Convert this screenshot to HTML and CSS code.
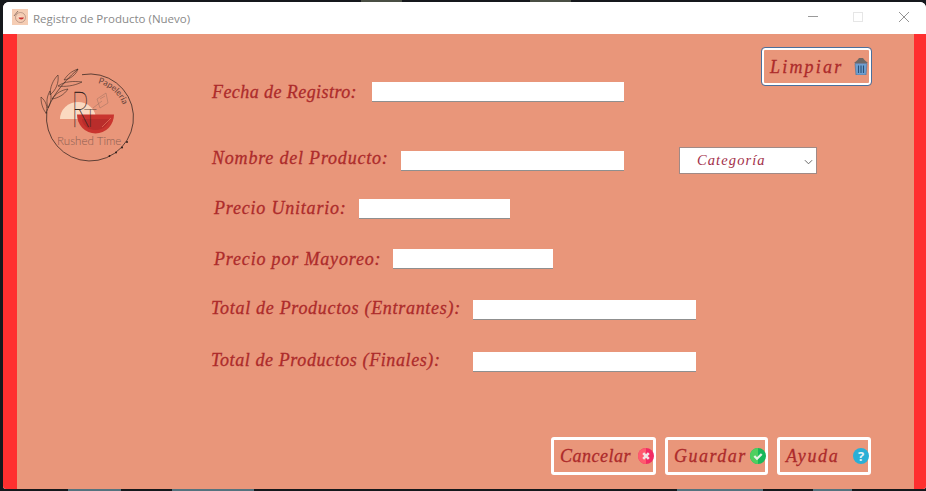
FILE: index.html
```html
<!DOCTYPE html>
<html lang="es">
<head>
<meta charset="utf-8">
<title>Registro de Producto (Nuevo)</title>
<link rel="stylesheet" href="styles.css">
</head>
<body>
<div class="window">
  <header class="titlebar">
    <svg class="app-icon" viewBox="0 0 16 16" aria-hidden="true">
      <rect width="16" height="16" fill="#f5cdb4"/>
      <circle cx="8.500" cy="8.500" r="5" fill="none" stroke="#8a6a5e" stroke-width=".5"/>
      <path d="M5 8.500a3 3 0 0 1 5 0z" fill="#fbe3d2"/>
      <path d="M6.500 8.500h5.500a2.900 2.900 0 0 1-5.500 0z" fill="#c8302e"/>
      <path d="M2 7 6 2" stroke="#6a5048" stroke-width=".7"/>
    </svg>
    <span class="title">Registro de Producto (Nuevo)</span>
    <div class="controls">
      <svg class="ctl" viewBox="0 0 10 10"><path d="M0 4.500h10" stroke="#9a9a9a" fill="none"/></svg>
      <svg class="ctl" viewBox="0 0 10 10"><rect x=".5" y=".5" width="9" height="9" fill="none" stroke="#e6e6e6"/></svg>
      <svg class="ctl ctl-close" viewBox="0 0 10 10"><path d="M0 0 10 10M10 0 0 10" stroke="#888" fill="none" stroke-width=".9"/></svg>
    </div>
  </header>
  <div class="frame">
    <main class="content">
      <aside class="logo-col">
        <svg class="logo" viewBox="40 66 98 98" role="img">
          <path d="M82 74.700A43.500 43.500 0 1 1 46.800 112" fill="none" stroke="#3b2a24" stroke-width=".8"/>
          <path d="M60 119A18 17 0 0 1 96 119Z" fill="#fbd9c0"/>
          <path d="M77 114.500H114A18.500 19 0 0 1 77 114.500Z" fill="#c9352f"/>
          <path d="M82 119H109A13.500 11 0 0 1 82 119Z" fill="#b92d2b"/>
          <path d="M102 127 111 118" stroke="#e0705a" stroke-width=".8"/>
          <path d="M46 114C50 100 60 85 78 69" fill="none" stroke="#3b2a24" stroke-width=".7"/>
          <path d="M64 80C68 74 72 71 78 69 76 75 70 79 64 80ZM58 86C65 81 74 81 82 82 74 86 65 87 58 86ZM50 95C50 87 53 80 58 75 59 83 56 90 50 95ZM52 99C56 93 62 90 68 89 64 95 58 98 52 99ZM46 113C42 108 41 102 41 97 46 101 48 107 46 113ZM48 108C46 102 47 96 50 91 52 97 51 103 48 108Z" fill="none" stroke="#3b2a24" stroke-width=".6"/>
          <path d="M97 99 106 93 108 103 100 108ZM93 108 102 101M100 99 105 96" fill="none" stroke="#9c7060" stroke-width=".5"/>
          <text class="logo-r" transform="translate(71 127) scale(.62 1)">R</text>
          <text class="logo-t" transform="translate(84 127) scale(.85 1)">T</text>
          <text class="logo-name" x="57" y="145">Rushed Time</text>
          <defs><path id="arc" d="M98 83A35 35 0 0 1 125 118"/></defs>
          <text class="logo-pap"><textPath href="#arc">Papelería</textPath></text>
          <circle cx="127" cy="142" r="1" fill="#2c1c18"/><circle cx="122" cy="147.500" r="1" fill="#2c1c18"/><circle cx="116" cy="152.500" r="1" fill="#2c1c18"/><circle cx="109.500" cy="156" r=".9" fill="#2c1c18"/>
        </svg>
      </aside>
      <div class="form">
        <div class="row row-first">
          <label class="lbl lbl-fecha">Fecha de Registro:</label>
          <input class="field w-252" type="text">
          <button class="btn btn-limpiar" type="button"><span>Limpiar</span>
            <svg class="ico" viewBox="0 0 14 17" aria-hidden="true">
              <path d="M0 5 3.500 2 5 0h4l1.500 2L14 5z" fill="#6e6866"/>
              <path d="M1 5.500h12l-1 11.500H2z" fill="#6f9fcf" stroke="#466c95" stroke-width=".6"/>
              <path d="M4.500 7.500v7.500M7 7.500v7.500M9.500 7.500v7.500" stroke="#2a5078" stroke-width="1.100"/>
            </svg>
          </button>
        </div>
        <div class="row row-name">
          <label class="lbl lbl-nombre">Nombre del Producto:</label>
          <input class="field w-223" type="text">
          <div class="select"><span>Categoría</span>
            <svg class="chev" viewBox="0 0 10 6"><path d="M1 1 5 5 9 1" fill="none" stroke="#666" stroke-width="1.100"/></svg>
          </div>
        </div>
        <div class="row row-unit">
          <label class="lbl lbl-precio">Precio Unitario:</label>
          <input class="field w-151" type="text">
        </div>
        <div class="row row-mayor">
          <label class="lbl lbl-mayor">Precio por Mayoreo:</label>
          <input class="field w-160" type="text">
        </div>
        <div class="row row-ent">
          <label class="lbl lbl-total lbl-ent">Total de Productos (Entrantes):</label>
          <input class="field w-223" type="text">
        </div>
        <div class="row row-fin">
          <label class="lbl lbl-total lbl-fin">Total de Productos (Finales):</label>
          <input class="field w-223" type="text">
        </div>
        <footer class="actions">
          <button class="btn btn-cancel" type="button"><span>Cancelar</span>
            <svg class="ico-round" viewBox="0 0 16 16" aria-hidden="true"><circle cx="8" cy="8" r="8" fill="#f22a63"/><path d="M8 0a8 8 0 0 0 0 16z" fill="#ff5a6e"/><path d="M5.200 5.200l5.600 5.600M10.800 5.200l-5.600 5.600" stroke="#f3e3e3" stroke-width="2.600"/></svg>
          </button>
          <button class="btn btn-save" type="button"><span>Guardar</span>
            <svg class="ico-round" viewBox="0 0 16 16" aria-hidden="true"><circle cx="8" cy="8" r="8" fill="#17b85a"/><path d="M8 0a8 8 0 0 0 0 16z" fill="#4fcf5f"/><path d="M4.300 8l2.700 2.700 4.700-4.700" fill="none" stroke="#e8f3e8" stroke-width="2.300"/></svg>
          </button>
          <button class="btn btn-help" type="button"><span>Ayuda</span>
            <svg class="ico-round" viewBox="0 0 16 16" aria-hidden="true"><circle cx="8" cy="8" r="8" fill="#2aafd6"/><text class="q" x="8" y="12.500" text-anchor="middle">?</text></svg>
          </button>
        </footer>
      </div>
    </main>
  </div>
</div>
</body>
</html>
```

FILE: styles.css
```css
* { box-sizing: border-box; }
html, body { margin: 0; height: 100%; }
body {
  overflow: hidden;
  background-color: #15181c;
  background-image:
    linear-gradient(to right, transparent 68px, #55737f 68px, #55737f 121px, transparent 121px, transparent 172px, #55737f 172px, #55737f 254px, transparent 254px, transparent 677px, #55737f 677px, #55737f 763px, transparent 763px, transparent 813px, #55737f 813px, #55737f 852px, transparent 852px),
    linear-gradient(to right, transparent 361px, #4a4f44 361px, #4a4f44 402px, transparent 402px, transparent 530px, #4a4f44 530px, #4a4f44 571px, transparent 571px);
  background-repeat: no-repeat;
  background-size: 100% 2px, 100% 2px;
  background-position: 0 100%, 0 0;
}
.window {
  width: 923px; height: 487px; margin: 2px 0 0 3px;
  display: flex; flex-direction: column;
  border-radius: 6px 6px 3px 3px; overflow: hidden; background: #fff;
}
.titlebar {
  flex: 0 0 32px; display: flex; align-items: center;
  padding: 0 0 2px 9px; background: #fff;
}
.app-icon { width: 16px; height: 16px; }
.title {
  margin: 2px 0 0 5px; font: 11.5px "Open Sans", sans-serif; color: #8a8a8a;
}
.controls { margin-left: auto; display: flex; gap: 35px; padding-right: 17px; }
.ctl { width: 10px; height: 10px; display: block; }
.ctl-close { margin-left: 1px; }
.frame {
  flex: 1; background: #ff2f2f; padding: 0 12px 0 14px; min-height: 0;
}
.content {
  height: 100%; background: #e9967a; display: flex;
  padding: 13px 42px 14px 0;
}
.logo-col { flex: 0 0 195px; padding: 19px 0 0 23px; }
.logo { width: 98px; height: 98px; display: block; }
.logo-r { font: 100 50px Lato, sans-serif; fill: #33231e; stroke: #33231e; stroke-width: .3px; }
.logo-t { font: 100 26px Lato, sans-serif; fill: #33231e; stroke: #33231e; stroke-width: .2px; }
.logo-name { font: 300 11.600px Lato, sans-serif; fill: #8a5d50; }
.logo-pap { font: 8.500px Lato, sans-serif; fill: #5f4038; }
.form { flex: 1; display: flex; flex-direction: column; min-width: 0; }
.row { display: flex; align-items: center; }
.row-first { height: 55px; align-items: flex-end; }
.row-name { margin-top: 45px; height: 27px; }
.row-unit { margin-top: 25px; height: 20px; }
.row-mayor { margin-top: 30px; height: 20px; }
.row-ent { margin-top: 31px; height: 20px; }
.row-fin { margin-top: 32px; height: 20px; }
.lbl, .btn span {
  font-family: "Liberation Serif", serif; font-style: italic; font-weight: 400;
  font-size: 18px; line-height: 20px;
  color: #ad2b2b; white-space: nowrap; -webkit-text-stroke: .3px #ad2b2b;
}
.lbl { flex: none; }
.lbl-fecha { width: 160px; letter-spacing: .43px; }
.lbl-nombre { width: 189px; letter-spacing: .8px; margin-bottom: 5px; }
.lbl-precio { width: 145px; margin-left: 2px; letter-spacing: .8px; margin-bottom: 3px; }
.lbl-mayor { width: 179px; margin-left: 2px; letter-spacing: .83px; }
.lbl-total { margin-left: -1px; width: 262px; margin-bottom: 4px; }
.lbl-ent { letter-spacing: .7px; }
.lbl-fin { letter-spacing: .6px; }
.field {
  height: 20px; border: 0; border-bottom: 1px solid #8f8f8f; background: #fff; padding: 0; flex: none;
  border-radius: 0; display: block;
}
.w-252 { width: 252px; }
.w-223 { width: 223px; }
.w-151 { width: 151px; }
.w-160 { width: 160px; }
.select {
  margin-left: 55px; width: 138px; height: 27px; background: #fff; border: 1px solid #a08a86;
  display: flex; align-items: center; padding: 0 3px 0 17px; justify-content: space-between;
}
.select span {
  font: italic 14.500px "Liberation Serif", serif; letter-spacing: 1.1px; color: #a3304a;
}
.chev { width: 9px; height: 6px; margin-top: 3px; }
.btn {
  display: flex; align-items: center; justify-content: space-between; flex: none;
  height: 38px; background: transparent; border: 3px solid #fff; border-radius: 3px; padding: 0 0 0 6px; margin: 0;
}
.btn-limpiar {
  margin: 1px 1px 0 auto; align-self: flex-start; width: 109px; height: 37px; border-width: 2px;
  outline: 1px solid #4a6f9c; padding: 0 1px 0 6px;
}
.btn-limpiar span { letter-spacing: 2.2px; }
.ico { width: 14px; height: 17px; }
.ico-round { width: 16px; height: 16px; margin-right: -1px; }
.q { font: 700 13px "Open Sans", sans-serif; fill: #e6f3f8; }
.actions { margin-top: auto; display: flex; justify-content: flex-end; gap: 9px; padding-right: 1px; }
.btn-cancel { width: 105px; }
.btn-cancel span { letter-spacing: .5px; }
.btn-save { width: 103px; }
.btn-save span { letter-spacing: 1.5px; }
.btn-help { width: 94px; }
.btn-help span { letter-spacing: 1.7px; }
```
